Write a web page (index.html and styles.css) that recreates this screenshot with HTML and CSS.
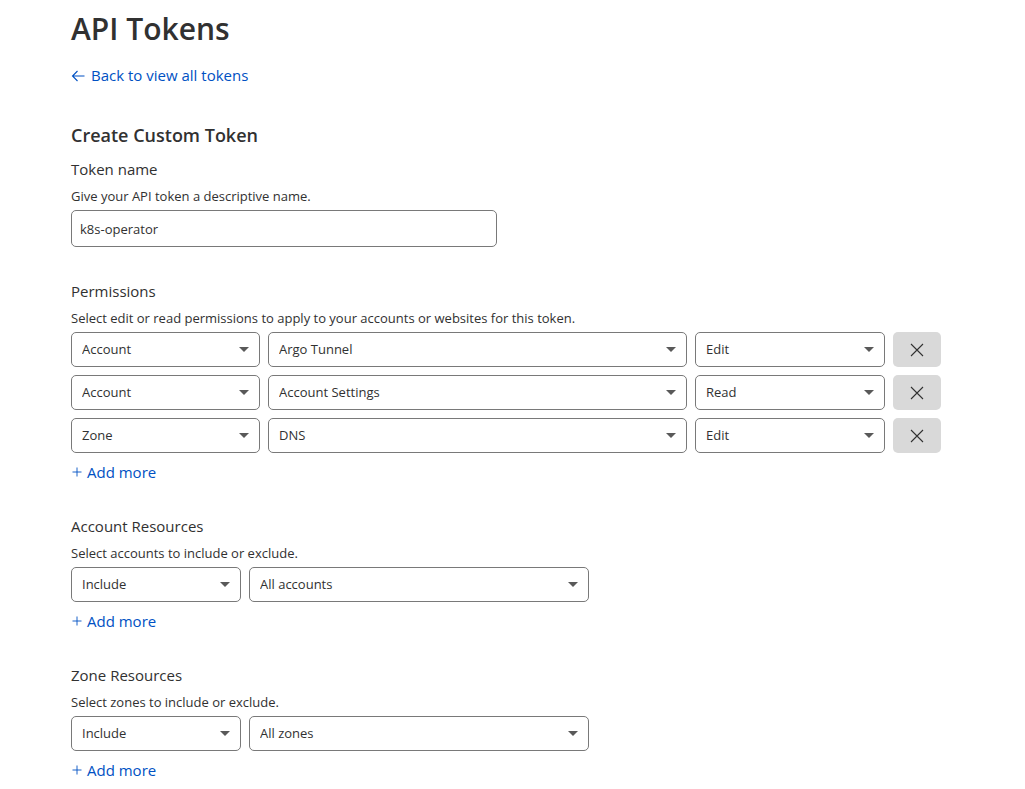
FILE: index.html
```html
<!DOCTYPE html>
<html lang="en">
<head>
<meta charset="utf-8">
<meta name="viewport" content="width=device-width, initial-scale=1">
<title>API Tokens</title>
<link rel="stylesheet" href="styles.css">
</head>
<body>
<svg class="symbols" aria-hidden="true">
  <symbol id="caret" viewBox="0 0 10 5"><path d="M0 0h10L5 5z" fill="currentColor"/></symbol>
  <symbol id="plus" viewBox="0 0 12 12"><path d="M6 1.500v9M1.500 6h9" fill="none" stroke="currentColor" stroke-width="0.900"/></symbol>
  <symbol id="cross" viewBox="0 0 14 14"><path d="M1 1l12 12M13 1L1 13" fill="none" stroke="currentColor" stroke-width="1.100"/></symbol>
</svg>
<main class="page">
  <h1 class="page-title">API Tokens</h1>
  <a class="link back-link" href="#tokens"><svg class="arrow" viewBox="0 0 14 14" aria-hidden="true"><path d="M6.500 3L1.500 8l5 5M1.500 8H13.500" fill="none" stroke="currentColor" stroke-width="1.100"/></svg>Back to view all tokens</a>
  <form class="token-form">
    <h2 class="form-title">Create Custom Token</h2>

    <section class="section">
      <label class="label" for="token-name">Token name</label>
      <p class="hint">Give your API token a descriptive name.</p>
      <input class="text-input" id="token-name" type="text" value="k8s-operator">
    </section>

    <section class="section">
      <h3 class="label">Permissions</h3>
      <p class="hint">Select edit or read permissions to apply to your accounts or websites for this token.</p>
      <div class="rows">
        <div class="permission-row">
          <div class="select"><select aria-label="Permission scope 1"><option>Account</option><option>Zone</option></select><svg class="caret" aria-hidden="true"><use href="#caret"/></svg></div>
          <div class="select"><select aria-label="Permission item 1"><option>Argo Tunnel</option></select><svg class="caret" aria-hidden="true"><use href="#caret"/></svg></div>
          <div class="select"><select aria-label="Permission level 1"><option>Edit</option><option>Read</option></select><svg class="caret" aria-hidden="true"><use href="#caret"/></svg></div>
          <button class="remove" type="button" aria-label="Remove permission 1"><svg class="cross" aria-hidden="true"><use href="#cross"/></svg></button>
        </div>
        <div class="permission-row">
          <div class="select"><select aria-label="Permission scope 2"><option>Account</option><option>Zone</option></select><svg class="caret" aria-hidden="true"><use href="#caret"/></svg></div>
          <div class="select"><select aria-label="Permission item 2"><option>Account Settings</option></select><svg class="caret" aria-hidden="true"><use href="#caret"/></svg></div>
          <div class="select"><select aria-label="Permission level 2"><option>Read</option><option>Edit</option></select><svg class="caret" aria-hidden="true"><use href="#caret"/></svg></div>
          <button class="remove" type="button" aria-label="Remove permission 2"><svg class="cross" aria-hidden="true"><use href="#cross"/></svg></button>
        </div>
        <div class="permission-row">
          <div class="select"><select aria-label="Permission scope 3"><option>Zone</option><option>Account</option></select><svg class="caret" aria-hidden="true"><use href="#caret"/></svg></div>
          <div class="select"><select aria-label="Permission item 3"><option>DNS</option></select><svg class="caret" aria-hidden="true"><use href="#caret"/></svg></div>
          <div class="select"><select aria-label="Permission level 3"><option>Edit</option><option>Read</option></select><svg class="caret" aria-hidden="true"><use href="#caret"/></svg></div>
          <button class="remove" type="button" aria-label="Remove permission 3"><svg class="cross" aria-hidden="true"><use href="#cross"/></svg></button>
        </div>
      </div>
      <button class="link add" type="button"><svg class="plus" aria-hidden="true"><use href="#plus"/></svg>Add more</button>
    </section>

    <section class="section">
      <h3 class="label">Account Resources</h3>
      <p class="hint">Select accounts to include or exclude.</p>
      <div class="resource-row">
        <div class="select"><select aria-label="Account rule"><option>Include</option><option>Exclude</option></select><svg class="caret" aria-hidden="true"><use href="#caret"/></svg></div>
        <div class="select"><select aria-label="Accounts"><option>All accounts</option></select><svg class="caret" aria-hidden="true"><use href="#caret"/></svg></div>
      </div>
      <button class="link add" type="button"><svg class="plus" aria-hidden="true"><use href="#plus"/></svg>Add more</button>
    </section>

    <section class="section">
      <h3 class="label">Zone Resources</h3>
      <p class="hint">Select zones to include or exclude.</p>
      <div class="resource-row">
        <div class="select"><select aria-label="Zone rule"><option>Include</option><option>Exclude</option></select><svg class="caret" aria-hidden="true"><use href="#caret"/></svg></div>
        <div class="select"><select aria-label="Zones"><option>All zones</option></select><svg class="caret" aria-hidden="true"><use href="#caret"/></svg></div>
      </div>
      <button class="link add" type="button"><svg class="plus" aria-hidden="true"><use href="#plus"/></svg>Add more</button>
    </section>
  </form>
</main>
</body>
</html>
```

FILE: styles.css
```css
* {
  box-sizing: border-box;
}

body {
  margin: 0;
  background: #fff;
  color: #313131;
  font-family: "Segoe UI", "Open Sans", "Noto Sans", sans-serif;
  font-size: 15px;
  line-height: 22px;
}

.symbols {
  display: none;
}

.page {
  padding: 9px 84px 0 71px;
}

.page-title {
  margin: 0 0 15px;
  font-size: 30px;
  font-weight: 600;
  line-height: 40px;
}

.link {
  display: flex;
  align-items: center;
  width: fit-content;
  padding: 0;
  border: 0;
  background: none;
  color: #0051c3;
  font: inherit;
  text-decoration: none;
  cursor: pointer;
}

.back-link {
  gap: 6px;
}

.arrow {
  width: 14px;
  height: 14px;
}

.token-form {
  margin-top: 35px;
}

.form-title {
  margin: 0 0 9px;
  font-size: 18px;
  font-weight: 600;
  line-height: 28px;
}

.section {
  margin-bottom: 32px;
}

.section:last-child {
  margin-bottom: 8px;
}

.label {
  display: block;
  margin: 0;
  font-size: 15px;
  font-weight: 400;
  line-height: 22px;
}

.hint {
  margin: 6px 0 4px;
  font-size: 13px;
  line-height: 20px;
}

.text-input {
  display: block;
  width: 100%;
  max-width: 426px;
  height: 37px;
  margin-bottom: 33px;
  padding: 0 8px;
  border: 1px solid #797979;
  border-radius: 5px;
  color: inherit;
  font-family: inherit;
  font-size: 13px;
}

.rows {
  display: grid;
  gap: 8px;
}

.permission-row {
  display: grid;
  grid-template-columns: 189fr 419fr 190fr 48px;
  gap: 8px;
}

.resource-row {
  display: grid;
  grid-template-columns: 1fr 2fr;
  gap: 8px;
  max-width: 518px;
}

.select {
  display: grid;
  align-items: center;
  min-width: 0;
}

.select select {
  grid-area: 1 / 1;
  width: 100%;
  height: 35px;
  padding: 0 28px 2px 10px;
  border: 1px solid #797979;
  border-radius: 5px;
  appearance: none;
  background: #fff;
  color: inherit;
  font-family: inherit;
  font-size: 13px;
}

.caret {
  grid-area: 1 / 1;
  justify-self: end;
  width: 10px;
  height: 5px;
  margin-right: 11px;
  color: #595959;
  pointer-events: none;
}

.remove {
  display: grid;
  place-items: center;
  padding: 0;
  border: 0;
  border-radius: 5px;
  background: #d9d9d9;
  color: #313131;
  cursor: pointer;
}

.cross {
  width: 14px;
  height: 14px;
}

.add {
  gap: 4px;
  margin-top: 8px;
}

.plus {
  width: 12px;
  height: 12px;
}
```
